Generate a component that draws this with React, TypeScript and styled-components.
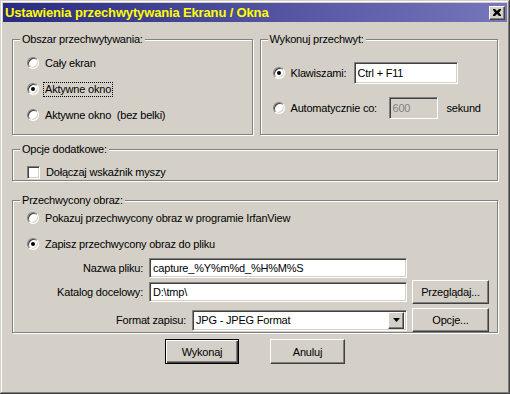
import React from "react";
import styled, { createGlobalStyle, css } from "styled-components";

const GlobalStyle = createGlobalStyle`
  html, body {
    margin: 0;
    padding: 0;
    background: #d4d0c8;
  }
  body {
    font-family: "Liberation Sans", Arial, sans-serif;
    font-size: 11px;
    letter-spacing: -0.2px;
    color: #000;
  }
`;

const bevelOut = css`
  border: 1px solid;
  border-color: #fff #404040 #404040 #fff;
  box-shadow: inset -1px -1px #808080, inset 1px 1px #d4d0c8;
`;

const bevelIn = css`
  border: 1px solid;
  border-color: #808080 #fff #fff #808080;
  box-shadow: inset 1px 1px #404040, inset -1px -1px #d4d0c8;
`;

const Window = styled.div`
  box-sizing: border-box;
  width: 510px;
  height: 394px;
  padding: 3px;
  background: #d4d0c8;
  box-shadow: inset -1px -1px #404040, inset 1px 1px #d4d0c8,
    inset -2px -2px #808080, inset 2px 2px #fff;
  display: flex;
  flex-direction: column;
`;

const TitleBar = styled.div`
  height: 19px;
  display: flex;
  align-items: center;
  justify-content: space-between;
  padding: 0 2px 0 2px;
  background: linear-gradient(to right, #2a2a82, #7676bc);
`;

const Title = styled.span`
  color: #ffff00;
  font-weight: bold;
  font-size: 13px;
  letter-spacing: -0.15px;
`;

const CloseButton = styled.div`
  box-sizing: border-box;
  width: 16px;
  height: 14px;
  background: #d4d0c8;
  ${bevelOut};
  display: flex;
  align-items: center;
  justify-content: center;
`;

const Body = styled.div`
  padding: 17px 9px 0 9px;
  display: flex;
  flex-direction: column;
`;

const TopRow = styled.div`
  display: flex;
  gap: 7px;
`;

const Group = styled.div<{ $h: number; $pad: string }>`
  position: relative;
  box-sizing: border-box;
  flex: 1;
  height: ${(p) => p.$h}px;
  padding: ${(p) => p.$pad};
  border: 1px solid #808080;
  box-shadow: inset 1px 1px #fff, 1px 1px #fff;
  display: flex;
  flex-direction: column;
`;

const GroupLabel = styled.span`
  position: absolute;
  top: -8px;
  left: 7px;
  padding: 0 2px 0 2px;
  background: #d4d0c8;
  line-height: 14px;
`;

const OptionRow = styled.div<{ $h?: number }>`
  display: flex;
  align-items: center;
  height: ${(p) => p.$h ?? 26}px;
`;

const Option = styled.label<{ $w?: number }>`
  display: flex;
  align-items: center;
  gap: 5px;
  width: ${(p) => (p.$w ? `${p.$w}px` : "auto")};
  flex-shrink: 0;
`;

const Radio = styled.span<{ $on?: boolean }>`
  position: relative;
  box-sizing: border-box;
  width: 12px;
  height: 12px;
  border-radius: 50%;
  background: #fff;
  border: 1px solid;
  border-color: #808080 #fff #fff #808080;
  box-shadow: inset 1px 1px #404040, inset -1px -1px #d4d0c8;
  ${(p) =>
    p.$on &&
    css`
      &::after {
        content: "";
        position: absolute;
        left: 3px;
        top: 3px;
        width: 4px;
        height: 4px;
        border-radius: 50%;
        background: #000;
      }
    `}
`;

const Check = styled.span`
  box-sizing: border-box;
  width: 13px;
  height: 13px;
  background: #fff;
  ${bevelIn};
`;

const Text = styled.span<{ $focus?: boolean }>`
  line-height: 13px;
  padding: 0 1px;
  white-space: pre;
  ${(p) =>
    p.$focus &&
    css`
      outline: 1px dotted #000;
    `}
`;

const Field = styled.div<{ $w: number; $h?: number; $disabled?: boolean }>`
  box-sizing: border-box;
  width: ${(p) => p.$w}px;
  height: ${(p) => p.$h ?? 21}px;
  flex-shrink: 0;
  background: ${(p) => (p.$disabled ? "#d4d0c8" : "#fff")};
  color: ${(p) => (p.$disabled ? "#808080" : "#000")};
  ${bevelIn};
  padding: 0 3px;
  display: flex;
  align-items: center;
  white-space: nowrap;
  overflow: hidden;
`;

const Suffix = styled.span`
  margin-left: 9px;
`;

const Select = styled(Field)`
  padding: 0 2px 0 3px;
  justify-content: space-between;
`;

const DropButton = styled.div`
  box-sizing: border-box;
  width: 16px;
  height: 17px;
  background: #d4d0c8;
  ${bevelOut};
  display: flex;
  align-items: center;
  justify-content: center;
`;

const FormRow = styled.div<{ $h: number; $mt: number }>`
  display: flex;
  align-items: center;
  justify-content: flex-end;
  gap: 5px;
  height: ${(p) => p.$h}px;
  margin-top: ${(p) => p.$mt}px;
  padding-right: 8px;
`;

const FieldLabel = styled.span`
  margin-right: 1px;
`;

const Button = styled.div<{ $w: number; $h?: number; $default?: boolean }>`
  box-sizing: border-box;
  width: ${(p) => p.$w}px;
  height: ${(p) => p.$h ?? 23}px;
  flex-shrink: 0;
  background: #d4d0c8;
  display: flex;
  align-items: center;
  justify-content: center;
  ${(p) =>
    p.$default
      ? css`
          border: 1px solid #000;
          box-shadow: inset 1px 1px #fff, inset -1px -1px #404040,
            inset -2px -2px #808080;
        `
      : bevelOut}
`;

const Spacer = styled.div`
  width: 77px;
  flex-shrink: 0;
`;

const ButtonRow = styled.div`
  display: flex;
  justify-content: center;
  gap: 31px;
  margin-top: 6px;
`;

export default function App() {
  return (
    <>
      <GlobalStyle />
      <Window>
        <TitleBar>
          <Title>Ustawienia przechwytywania Ekranu / Okna</Title>
          <CloseButton>
            <svg width="8" height="7" viewBox="0 0 8 7">
              <path d="M0 0h2l2 2 2-2h2v1L6 3.5 8 6v1H6L4 5 2 7H0V6l2-2.5L0 1z" fill="#000" />
            </svg>
          </CloseButton>
        </TitleBar>
        <Body>
          <TopRow>
            <Group $h={96} $pad="10px 0 0 14px">
              <GroupLabel>Obszar przechwytywania:</GroupLabel>
              <OptionRow>
                <Option>
                  <Radio />
                  <Text>Cały ekran</Text>
                </Option>
              </OptionRow>
              <OptionRow>
                <Option>
                  <Radio $on />
                  <Text $focus>Aktywne okno</Text>
                </Option>
              </OptionRow>
              <OptionRow>
                <Option>
                  <Radio />
                  <Text>Aktywne okno  (bez belki)</Text>
                </Option>
              </OptionRow>
            </Group>
            <Group $h={96} $pad="22px 0 0 12px">
              <GroupLabel>Wykonuj przechwyt:</GroupLabel>
              <OptionRow $h={22}>
                <Option $w={81}>
                  <Radio $on />
                  <Text>Klawiszami:</Text>
                </Option>
                <Field $w={104} $h={22}>Ctrl + F11</Field>
              </OptionRow>
              <OptionRow $h={22} style={{ marginTop: 13 }}>
                <Option $w={116}>
                  <Radio />
                  <Text>Automatycznie co:</Text>
                </Option>
                <Field $w={49} $h={22} $disabled>
                  600
                </Field>
                <Suffix>sekund</Suffix>
              </OptionRow>
            </Group>
          </TopRow>

          <Group $h={46} $pad="15px 0 0 14px" style={{ marginTop: 14 }}>
            <GroupLabel>Opcje dodatkowe:</GroupLabel>
            <OptionRow $h={15}>
              <Option>
                <Check />
                <Text>Dołączaj wskaźnik myszy</Text>
              </Option>
            </OptionRow>
          </Group>

          <Group $h={140} $pad="7px 0 0 14px" style={{ marginTop: 19 }}>
            <GroupLabel>Przechwycony obraz:</GroupLabel>
            <OptionRow $h={20}>
              <Option>
                <Radio />
                <Text>Pokazuj przechwycony obraz w programie IrfanView</Text>
              </Option>
            </OptionRow>
            <OptionRow $h={20} style={{ marginTop: 6 }}>
              <Option>
                <Radio $on />
                <Text>Zapisz przechwycony obraz do pliku</Text>
              </Option>
            </OptionRow>
            <FormRow $h={20} $mt={4}>
              <FieldLabel>Nazwa pliku:</FieldLabel>
              <Field $w={258} $h={20}>capture_%Y%m%d_%H%M%S</Field>
              <Spacer />
            </FormRow>
            <FormRow $h={24} $mt={2}>
              <FieldLabel>Katalog docelowy:</FieldLabel>
              <Field $w={258} $h={20}>D:\tmp\</Field>
              <Button $w={77} $h={24}>Przeglądaj...</Button>
            </FormRow>
            <FormRow $h={24} $mt={4}>
              <FieldLabel>Format zapisu:</FieldLabel>
              <Select $w={215} $h={21}>
                <span>JPG - JPEG Format</span>
                <DropButton>
                  <svg width="7" height="4" viewBox="0 0 7 4">
                    <path d="M0 0h7L3.5 4z" fill="#000" />
                  </svg>
                </DropButton>
              </Select>
              <Button $w={77} $h={24}>Opcje...</Button>
            </FormRow>
          </Group>

          <ButtonRow>
            <Button $w={74} $h={25} $default>
              Wykonaj
            </Button>
            <Button $w={75} $h={25}>
              Anuluj
            </Button>
          </ButtonRow>
        </Body>
      </Window>
    </>
  );
}
